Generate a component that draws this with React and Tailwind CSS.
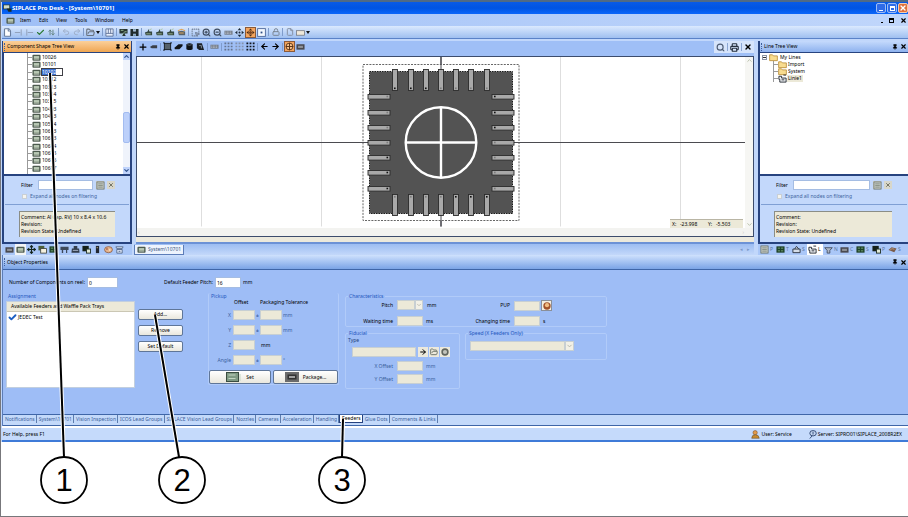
import {
  ArrowLeft,
  ArrowRight,
  ArrowUpDown,
  Check,
  ChevronDown,
  ChevronUp,
  File,
  FolderOpen,
  Lock,
  Move,
  Pin,
  Plus,
  Printer,
  Redo2,
  Search,
  SquareDashedMousePointer,
  Undo2,
  X,
  ZoomIn,
  ZoomOut,
} from "lucide-react";

const MENU = ["Item", "Edit", "View", "Tools", "Window", "Help"];

const SHAPES = [
  "10026", "10101", "10102", "10312", "10313", "10314", "10315", "10403",
  "10413", "10504", "10603", "10613", "10614", "10615", "10616", "10617",
];

const PROPERTY_TABS = [
  "Notifications", "System\\10701", "Vision Inspection", "ICOS Lead Groups",
  "SIPLACE Vision Lead Groups", "Nozzles", "Cameras", "Acceleration",
  "Handling", "Feeders", "Glue Dots", "Comments & Links",
];

const svgProps = { viewBox: "0 0 10 10", className: "size-[9px] shrink-0", "aria-hidden": true };

const Chip = () => (
  <svg {...svgProps}>
    <rect x="0.5" y="2" width="9" height="6.5" rx="1" fill="#4c5a4e" />
    <rect x="2" y="3.4" width="6" height="3" fill="#b9c8b4" />
    <path d="M2 7.4h6" stroke="#e0e8dc" strokeWidth="0.6" />
  </svg>
);

const DarkChip = () => (
  <svg {...svgProps}>
    <rect x="0.5" y="2.5" width="9" height="6" fill="#4a4a50" />
    <rect x="2.3" y="4.2" width="5.4" height="2.4" fill="#8f9298" />
  </svg>
);

const StopLeft = () => (
  <svg {...svgProps}>
    <path d="M1 5h6M8 1.5v7" stroke="#8d9cb5" fill="none" />
  </svg>
);

const StopRight = () => (
  <svg {...svgProps}>
    <path d="M3 5h6M2 1.5v7" stroke="#8d9cb5" fill="none" />
  </svg>
);

const Columns = () => (
  <svg {...svgProps}>
    <path d="M1 1h8v8H1zM1 6h8M3.7 1v5M6.3 1v5" stroke="#55688f" fill="#e8f0fd" strokeWidth="0.9" />
  </svg>
);

const Monitor = () => (
  <svg {...svgProps}>
    <path d="M0.5 1h9v5H6l1.5 3h-4L5 6H0.5z" fill="#27352f" />
    <path d="M2 2.6h3M6 4.2h2.5M3 7.6l3-3" stroke="#9bbf9b" />
  </svg>
);

const AppLogo = () => (
  <svg {...svgProps}>
    <rect x="0.5" y="1" width="7" height="4.5" fill="#cfdccb" stroke="#24352c" strokeWidth="0.8" />
    <path d="M4 5h5.5v3.5H6z" fill="#1d2b24" />
  </svg>
);

const Floppies = () => (
  <svg {...svgProps}>
    <path d="M0.5 1h3v3h3V1h3v8h-3V6.3h-3V9h-3z" fill="#1f2b2b" />
    <path d="M4 2h2M4 8h2" stroke="#3f6d6a" />
  </svg>
);

const Machine = () => (
  <svg {...svgProps}>
    <path d="M1 5l3-1 1-3 1 3h3v4H2z" fill="#35473f" />
    <path d="M2.5 6.5h5M6 2l2.5-1" stroke="#a8c29c" strokeWidth="0.9" />
  </svg>
);

const MachineGold = () => (
  <svg {...svgProps}>
    <path d="M1 4l4-1 4 1v4H2z" fill="#57636b" />
    <path d="M2.5 5.5h5M1 3l4-1.5L9 3" stroke="#e0a457" strokeWidth="1.2" fill="none" />
  </svg>
);

const Keyboard = () => (
  <svg {...svgProps}>
    <rect x="0.5" y="3" width="9" height="4.5" fill="#747d8a" />
    <path d="M1.5 4.5h7M1.5 6h7" stroke="#d7dce5" strokeDasharray="1 0.7" strokeWidth="0.8" />
  </svg>
);

const FourArrows = () => (
  <svg {...svgProps}>
    <path d="M5 0l2 2.6H3zM5 10L3 7.4h4zM0 5l2.6-2v4zM10 5L7.4 7V3z" fill="#1c2a3a" />
    <circle cx="5" cy="5" r="1.1" fill="#1c2a3a" />
  </svg>
);

const FourArrowsHot = () => (
  <svg {...svgProps}>
    <path d="M5 0.5l2 2.4H3zM5 9.5L3 7.1h4zM0.5 5l2.4-2v4zM9.5 5L7.1 7V3z" fill="#4a2a14" />
    <circle cx="5" cy="5" r="1.7" fill="#7a4420" />
  </svg>
);

const Target = () => (
  <svg {...svgProps}>
    <circle cx="5" cy="5" r="3.8" fill="#f6c087" stroke="#5c3517" />
    <path d="M5 1v8M1 5h8" stroke="#5c3517" strokeWidth="1.1" />
  </svg>
);

const FitBox = () => (
  <svg {...svgProps}>
    <rect x="0.7" y="0.7" width="8.6" height="8.6" fill="#f4f8fe" stroke="#4d679a" />
    <rect x="4" y="4" width="2" height="2" fill="#2f4d86" />
  </svg>
);

const Tray = () => (
  <svg {...svgProps}>
    <rect x="0.7" y="3" width="8.6" height="5" fill="#eee8da" stroke="#6f6f73" strokeWidth="0.8" />
  </svg>
);

const Component = () => (
  <svg {...svgProps}>
    <rect x="1.5" y="1.5" width="7" height="7" fill="#56616a" stroke="#14181c" />
    <path d="M0 1h2M8 1h2M0 9h2M8 9h2" stroke="#14181c" />
  </svg>
);

const Blob = () => (
  <svg {...svgProps}>
    <path d="M1 5.5L4 3.5h5v3.5H3z" fill="#3a3f47" />
  </svg>
);

const Eraser = () => (
  <svg {...svgProps}>
    <path d="M0.5 6.5L5 2.5h4.5v2L6 8H1z" fill="#111418" />
  </svg>
);

const Cylinder = () => (
  <svg {...svgProps}>
    <path d="M1.5 2.5v5.5q3.5 2 7 0V2.5q-3.5-2-7 0z" fill="#0e1216" />
    <path d="M2.5 3q2.5 1.2 5 0" stroke="#8792a0" fill="none" strokeWidth="0.7" />
  </svg>
);

const Prism = () => (
  <svg {...svgProps}>
    <path d="M1 1.5h5.5L9 9H3.5L1 7z" fill="#1b2026" />
    <path d="M3.5 4h2.5v3" stroke="#9ba8b8" fill="none" strokeWidth="0.8" />
  </svg>
);

const Dots = ({ color }) => (
  <svg {...svgProps}>
    <path d="M0.5 1.5h9M0.5 5h9M0.5 8.5h9" stroke={color} strokeWidth="1.8" strokeDasharray="2 1.5" />
  </svg>
);

const DotsGrey = () => <Dots color="#66758f" />;
const DotsLight = () => <Dots color="#8391aa" />;
const DotsDark = () => <Dots color="#10151d" />;

const Board = () => (
  <svg {...svgProps}>
    <rect x="0.5" y="1.5" width="9" height="7" fill="#1d4027" />
    <path d="M2 3.5h2.5M5.5 3.5h2.5M2 6.5h2.5M5.5 6.5h2.5" stroke="#79a97b" />
  </svg>
);

const Stack = () => (
  <svg {...svgProps}>
    <rect x="0.5" y="1" width="6.5" height="5" fill="#4d5f38" />
    <rect x="3" y="4" width="6.5" height="5" fill="#f5f2e0" stroke="#3a3d35" strokeWidth="0.9" />
  </svg>
);

const StackDark = () => (
  <svg {...svgProps}>
    <rect x="0.5" y="1" width="7" height="6" fill="#152019" />
    <rect x="5" y="4.5" width="4.5" height="4.5" fill="#e3ead7" stroke="#1f2f24" />
  </svg>
);

const Bench = () => (
  <svg {...svgProps}>
    <path d="M0.5 2h9v3.5H8V9H6.7V5.5H3.5V9H2V5.5H.5z" fill="#3d4859" />
  </svg>
);

const Scanner = () => (
  <svg {...svgProps}>
    <path d="M3 1h4v3h2l.5 4.5h-9L1 4h2z" fill="#333d4b" />
    <path d="M2 6h6" stroke="#aab7cc" />
  </svg>
);

const Bar = () => (
  <svg {...svgProps}>
    <rect x="3.2" y="1" width="3.6" height="8" fill="#222831" />
    <path d="M4 3h1.5" stroke="#c7b37a" />
  </svg>
);

const Palette = () => (
  <svg {...svgProps}>
    <ellipse cx="5" cy="5.2" rx="4.4" ry="3.4" fill="#e5b48d" stroke="#83543a" strokeWidth="0.8" />
    <circle cx="3.3" cy="4.5" r="0.9" fill="#8a3b2c" />
    <circle cx="6.4" cy="5.6" r="0.9" fill="#fff3d9" />
  </svg>
);

const Basket = () => (
  <svg {...svgProps}>
    <path d="M1 2h8l-1 2H2zM2 5h6v4H2z" stroke="#4d5f80" fill="#dbe6f8" strokeWidth="0.9" />
    <path d="M4 7h2" stroke="#4d5f80" />
  </svg>
);

const Sheet = () => (
  <svg {...svgProps}>
    <rect x="1" y="1" width="8" height="8" fill="#c3c8c2" stroke="#5e665e" strokeWidth="0.8" />
    <path d="M2.5 3.2h5M2.5 5h5M2.5 6.8h5" stroke="#6c7769" strokeWidth="0.7" />
  </svg>
);

const Plug = () => (
  <svg {...svgProps}>
    <path d="M1 4.5h8v4H1zM3 4.5l2-3 2.5 3" fill="#d5dde8" stroke="#27303d" strokeWidth="1" />
  </svg>
);

const LineIcon = () => (
  <svg {...svgProps}>
    <path d="M1 2.5h3v2h5V9H2V6H1z" fill="#eceff2" stroke="#20262e" strokeWidth="1" />
    <path d="M6 1.2h3M4 6.5h3" stroke="#20262e" />
  </svg>
);

const Nozzle = () => (
  <svg {...svgProps}>
    <path d="M0.8 3h8.4L6.5 6v3h-3V6z" fill="#aeb6c4" stroke="#3a4558" strokeWidth="0.9" />
  </svg>
);

const Gem = () => (
  <svg {...svgProps}>
    <path d="M0.5 5.5L4 2.5l5.5 1.3L7 8z" fill="#7a5b48" />
    <path d="M2.5 5.3l2-1.2 2.6.6" stroke="#c8ab8f" fill="none" strokeWidth="0.8" />
  </svg>
);

const Folder = () => (
  <svg {...svgProps}>
    <path d="M0.7 2h3.2l1 1.2h4.4V8.5H.7z" fill="#f8dc8f" stroke="#b78a33" strokeWidth="0.9" />
  </svg>
);

const User = () => (
  <svg {...svgProps}>
    <circle cx="4.6" cy="3" r="2.4" fill="#e19a4a" stroke="#7a4b21" strokeWidth="0.6" />
    <path d="M0.8 9.2q0-4 4-4t4.4 4z" fill="#c98a2e" stroke="#5f4b2a" strokeWidth="0.6" />
  </svg>
);

const Server = () => (
  <svg {...svgProps}>
    <ellipse cx="5.6" cy="3.6" rx="3.6" ry="3" fill="#c0d2ee" stroke="#2f4672" />
    <path d="M4.5 6.5L2 9.5M5.6 2v3" stroke="#2f4672" />
  </svg>
);

const lucide = (Glyph, className) => () => <Glyph className={className} strokeWidth={3} />;

const FileIcon = lucide(File, "size-[9px] fill-white text-[#6b7f9f]");
const CheckIcon = lucide(Check, "size-[9px] text-[#2b7a35]");
const SortIcon = lucide(ArrowUpDown, "size-[7px] text-[#5a7b77]");
const UndoIcon = lucide(Undo2, "size-2 text-[#9fb0cb]");
const RedoIcon = lucide(Redo2, "size-2 text-[#9fb0cb]");
const OpenIcon = lucide(FolderOpen, "size-[9px] text-[#69737f]");
const SelectIcon = lucide(SquareDashedMousePointer, "size-[9px] text-[#75849b]");
const ZoomInIcon = lucide(ZoomIn, "size-[9px] text-[#3e4c60]");
const ZoomOutIcon = lucide(ZoomOut, "size-[9px] text-[#3e4c60]");
const LockIcon = lucide(Lock, "size-2 text-[#7c8796]");
const CopyIcon = lucide(File, "size-2 text-[#8792a6]");
const PlusIcon = lucide(Plus, "size-[10px] text-black");
const LeftIcon = lucide(ArrowLeft, "size-[9px] text-black");
const RightIcon = lucide(ArrowRight, "size-[9px] text-black");
const MoveIcon = lucide(Move, "size-[9px] text-[#14251b]");

const MAIN_TOOLS = [
  ["New", FileIcon], ["First", StopLeft], ["Last", StopRight], ["Apply", CheckIcon], ["Sort", SortIcon], null,
  ["Undo", UndoIcon], ["Redo", RedoIcon], null,
  ["Open", OpenIcon, true], null,
  ["Columns", Columns], null,
  ["Monitor", Monitor], ["Save all", Floppies], null,
  ["Head", Machine], ["Gantry", Machine], ["Conveyor", Machine], ["Feeder", MachineGold], null,
  ["Select", SelectIcon], ["Zoom in", ZoomInIcon], ["Zoom out", ZoomOutIcon], ["Keyboard", Keyboard],
  ["Pan", FourArrows], ["Center", FourArrowsHot, false, true], ["Fit", FitBox], null,
  ["Lock", LockIcon], null,
  ["Copy", CopyIcon], ["Tray", Tray, true],
];

const SHAPE_TOOLS = [
  ["Add", PlusIcon], ["Body", Blob], null,
  ["Component", Component], ["Eraser", Eraser], ["Cylinder", Cylinder], ["Prism", Prism], null,
  ["Leads", Keyboard], null,
  ["Grid", DotsGrey], ["Fine grid", DotsLight], ["Balls", DotsDark], null,
  ["Back", LeftIcon], ["Forward", RightIcon], null,
  ["Crosshair", Target, false, true], ["Package", DarkChip],
];

const LEFT_VIEWS = [
  ["Components", DarkChip], ["Component shapes", Chip], ["Fiducials", MoveIcon], ["Panels", Stack], ["Boards", Board],
  ["Stations", Bench], ["Machines", Scanner], ["Setups", StackDark], ["Feeders", Bar], ["Recipes", Palette], ["Jobs", Basket],
];

const RIGHT_VIEWS = [
  ["P", Sheet], ["T", Board], ["S", Plug], ["L", LineIcon], ["N", Nozzle], ["C", DarkChip], ["S", Board], ["P", StackDark], ["S", Gem],
];

const Toolbar = ({ tools }) => (
  <div className="flex items-center">
    {tools.map((tool, i) => {
      if (!tool) return <span key={i} className="mx-px h-2 w-px bg-[#7f9ccc]" />;
      const [label, Glyph, hasMenu, active] = tool;
      return (
        <button
          key={i}
          aria-label={label}
          className={`flex h-[11px] shrink-0 items-center justify-center ${hasMenu ? "w-4" : "w-[11px]"} ${
            active ? "border border-[#8a5a3a] bg-[#f3a45d]" : ""
          }`}
        >
          <Glyph />
          {hasMenu && (
            <svg viewBox="0 0 4 3" className="ml-px h-[3px] w-1">
              <path d="M0 0h4L2 3z" fill="#111" />
            </svg>
          )}
        </button>
      );
    })}
  </div>
);

const PanelHeader = ({ title, className }) => (
  <div className={`flex shrink-0 items-center gap-[2px] px-px ${className}`}>
    <span className="h-2 w-px border-l border-dotted border-[#3d5e9c]" />
    <h2 className="grow whitespace-nowrap">{title}</h2>
    <button aria-label={`Pin ${title}`}><Pin className="size-[6px] fill-black text-black" strokeWidth={2} /></button>
    <button aria-label={`Close ${title}`}><X className="size-[7px] text-black" strokeWidth={4} /></button>
  </div>
);

const FilterPanel = ({ id, comment, className, inputClass }) => (
  <div className="shrink-0 border-t-2 border-[#27437f] bg-[#c3d8fb]">
    <div className={className}>
      <div className="flex items-center pt-1 pl-[2px]">
        <label htmlFor={id} className="w-[17px]">Filter</label>
        <input id={id} className={`h-[10px] border border-[#a5bde3] bg-white px-px ${inputClass}`} />
        <button aria-label="Apply filter" className="ml-[3px] flex size-2 items-center justify-center bg-[#d8d7cb]">
          <Sheet />
        </button>
        <button aria-label="Clear filter" className="ml-[3px] flex size-2 items-center justify-center bg-[#d8d7cb]">
          <X className="size-[6px] text-[#757565]" strokeWidth={4} />
        </button>
      </div>
      <label className="mt-[2px] ml-[3px] flex h-2 items-center gap-[3px] text-[#40659f]">
        <input type="checkbox" defaultChecked disabled className="size-[5px] appearance-none border border-[#c9cfd5] bg-[#f5f4ee]" />
        Expand all nodes on filtering
      </label>
    </div>
    <div className="mx-px mt-1 border-t border-[#7f9fd4]" />
    <div className={className}>
      <div className="mt-[6px] mb-[5px] h-[26px] border-t border-l border-[#8a8d86] bg-[#ece9d8] leading-[7px] whitespace-nowrap">
        <p className="pt-[2px] pl-px">{comment}</p>
        <p className="pl-px">Revision:</p>
        <p className="pl-px">Revision State: Undefined</p>
      </div>
    </div>
  </div>
);

const ShapeTree = () => (
  <section className="flex w-[130px] shrink-0 flex-col">
    <div className="flex grow flex-col border-2 border-t-0 border-[#27437f]">
      <PanelHeader title="Component Shape Tree View" className="-mx-px h-[11px] bg-linear-to-b from-[#fbd09a] to-[#efa651]" />
      <div className="flex h-[122px] border-t border-[#27437f] bg-white">
        <ul className="ml-[23px] flex grow flex-col justify-between border-l border-[#9a9a9a] pt-px pb-[2px]">
          {SHAPES.map((name) => (
            <li key={name} className="flex h-[7px] items-center leading-[7px]">
              <span className="w-1 border-t border-[#9a9a9a]" />
              <Chip />
              {name === "10102" ? (
                <input
                  aria-label="Shape name"
                  defaultValue={name}
                  className="h-2 w-[22px] border border-[#3f3f46] bg-linear-to-r from-[#3a70cf] from-70% to-white to-70% text-white"
                />
              ) : (
                <span className="ml-px">{name}</span>
              )}
            </li>
          ))}
        </ul>
        <div className="flex w-[7px] flex-col items-center justify-between bg-[#eff3fb] text-[#34558f]">
          <ChevronUp className="size-[7px] bg-[#bfd3fb]" strokeWidth={4} />
          <span className="mt-7 h-[31px] w-full rounded-xs border border-[#a3bcf0] bg-[#bcd0fa]" />
          <ChevronDown className="size-[7px] bg-[#bfd3fb]" strokeWidth={4} />
        </div>
      </div>
      <FilterPanel
        id="shape-filter"
        comment="Comment: Al Cap. RVJ 10 x 8.4 x 10.6"
        className="mx-[15px]"
        inputClass="w-[55px]"
      />
    </div>
    <nav className="flex h-[11px] items-center bg-[#aac7f8] pl-[2px]">
      {LEFT_VIEWS.map(([label, Glyph], i) => (
        <button key={label} aria-label={label} className={`flex h-[11px] w-[11px] items-center justify-center ${i === 1 ? "bg-[#f3f5f6]" : ""}`}>
          <Glyph />
        </button>
      ))}
    </nav>
  </section>
);

const PIN_OFFSETS = [-46, -30, -15, 0, 15, 30, 46];

// Package outline, drawn around the placement origin
const PackageDrawing = () => (
  <svg viewBox="-304 -86 616 180" preserveAspectRatio="xMidYMid slice" className="absolute inset-0 size-full">
    {[-239.5, -119.5, 119.5, 239.5].map((x) => (
      <path key={x} d={`M${x} -86V84`} stroke="#dedede" />
    ))}
    <path d="M-304 0H304M0 -86V84" stroke="#4b4b50" strokeWidth="1.2" />
    <rect x="-78" y="-78" width="156" height="156" fill="#fff" stroke="#555" strokeWidth="0.9" strokeDasharray="2 1.2" />
    <path d="M0 -86V-71M0 71V84M-78 0H-71M71 0H78" stroke="#4b4b50" />
    <rect x="-71.5" y="-71" width="143" height="142" fill="#535353" stroke="#1c1c1c" strokeDasharray="1.5 1" />
    {PIN_OFFSETS.map((o, i) => (
      <g key={o} fill="#a9a9a9" stroke="#2c2c2c" strokeWidth="0.9">
        <rect x={o - 2.5} y="-73" width="5" height="21" />
        <rect x={o - 2.5} y="52" width="5" height="21" />
        <rect x="-73" y={o - 2} width="22" height="4.6" />
        <rect x="51" y={o - 2} width="22" height="4.6" />
        <g stroke="none" fill="#111">
          <rect x={o - 1} y="-55" width="1.6" height="1.6" opacity={i < 3 ? 1 : 0.3} />
          <rect x={o - 1} y="53.5" width="1.6" height="1.6" opacity={i > 3 ? 1 : 0.3} />
          <rect x="-54.5" y={o - 0.8} width="1.6" height="1.6" opacity={i > 3 ? 1 : 0.3} />
          <rect x="53" y={o - 0.8} width="1.6" height="1.6" opacity={i < 3 ? 1 : 0.3} />
        </g>
      </g>
    ))}
    <circle r="35.3" fill="none" stroke="#fff" strokeWidth="2.4" />
    <path d="M-35 0H35M0 -35V35" stroke="#fff" strokeWidth="2.4" />
  </svg>
);

const ShapeEditor = () => (
  <section className="mx-1 flex min-w-0 grow flex-col">
    <div className="flex h-[15px] items-start justify-between bg-[#9fbff6] pl-px">
      <Toolbar tools={SHAPE_TOOLS} />
      <div className="flex h-3 items-center gap-[2px] bg-[#d6e4fb] px-[2px]">
        <button aria-label="Find"><Search className="size-[9px] text-[#4d5c74]" strokeWidth={3} /></button>
        <span className="h-2 w-px bg-[#8ba6d4]" />
        <button aria-label="Print"><Printer className="size-[9px] text-[#26303f]" strokeWidth={3} /></button>
        <span className="h-2 w-px bg-[#8ba6d4]" />
        <button aria-label="Close editor"><X className="size-2 text-black" strokeWidth={4} /></button>
      </div>
    </div>
    <div className="relative grow border border-[#3c4c6c] bg-white">
      <PackageDrawing />
      <div className="absolute inset-x-0 bottom-0 flex h-2 items-center justify-between bg-[#f3f3f0] px-px text-[#c3c3bd]">
        <span>‹</span>
        <span className="mr-2">›</span>
      </div>
      <div className="absolute top-0 right-0 bottom-2 flex w-2 flex-col items-center justify-between bg-[#f6f6f3] text-[#b4bba5]">
        <ChevronUp className="size-[7px]" strokeWidth={3} />
        <ChevronDown className="size-[7px]" strokeWidth={3} />
      </div>
      <dl className="absolute right-[10px] bottom-2 flex h-[9px] w-[73px] items-center border-t border-[#b9b5a4] bg-[#ece9d8] pl-[2px]">
        <dt className="w-2">X:</dt>
        <dd className="w-7">-23.998</dd>
        <dt className="w-2">Y:</dt>
        <dd>-5.503</dd>
      </dl>
    </div>
    <div className="h-[7px] border-b-2 border-[#6c92d6] bg-[#ece9dc]" />
    <div className="-ml-[2px] flex h-[11px] items-center justify-between bg-linear-to-b from-[#9dbdf2] to-[#c3d8fa]">
      <button className="flex h-[10px] items-center gap-[2px] border border-t-0 border-[#5c7db9] bg-[#edf3fd] px-[2px] text-[#3c5681]">
        <Chip />
        System\10701
      </button>
      <span className="mr-1 flex gap-1 text-[#7c99ca]"><span>◂</span><span>▸</span></span>
    </div>
  </section>
);

const LineTree = () => (
  <section className="flex w-[150px] shrink-0 flex-col">
    <div className="flex grow flex-col border-2 border-t-0 border-r-0 border-[#27437f]">
      <PanelHeader title="Line Tree View" className="h-[11px] bg-linear-to-b from-[#c5dafc] to-[#8eb2ee]" />
      <div className="grow border-t border-[#27437f] bg-white pt-px pl-[2px]">
        <div className="flex h-[7px] items-center gap-[2px] leading-[7px]">
          <span className="flex size-[5px] items-center justify-center border border-[#8b95a5]"><span className="h-px w-[3px] bg-[#333]" /></span>
          <Folder />
          My Lines
        </div>
        <ul className="ml-[11px] border-l border-[#9a9a9a]">
          {["Import", "System", "Linie1"].map((name) => (
            <li key={name} className="flex h-[7px] items-center leading-[7px]">
              <span className="w-1 border-t border-[#9a9a9a]" />
              {name === "Linie1" ? <LineIcon /> : <Folder />}
              <span className={`px-px ${name === "Linie1" ? "bg-[#ece9d8]" : ""}`}>{name}</span>
            </li>
          ))}
        </ul>
      </div>
      <FilterPanel id="line-filter" comment="Comment:" className="ml-[14px] w-[118px]" inputClass="w-[77px]" />
    </div>
    <nav className="flex h-[11px] items-center bg-[#aac7f8] pl-px text-[#56739f]">
      {RIGHT_VIEWS.map(([label, Glyph], i) => (
        <button key={i} className={`flex h-[11px] w-4 items-center gap-px pl-px ${i === 3 ? "bg-white text-black" : ""}`}>
          <Glyph />
          {label}
        </button>
      ))}
    </nav>
  </section>
);

const Field = ({ label, unit, id, labelClass }) => (
  <div className="flex h-[10px] items-center">
    <label htmlFor={id} className={`pr-1 text-right ${labelClass}`}>{label}</label>
    <input id={id} disabled className="h-[10px] w-[26px] border border-[#c7cfd3] bg-[#ece9d8]" />
    <span className="pl-[3px]">{unit}</span>
  </div>
);

const Group = ({ title, className, children }) => (
  <fieldset className={`min-w-0 rounded-xs border border-[#b1cbf9] ${className}`}>
    <legend className="ml-[2px] h-[6px] px-px leading-[6px] text-[#2457c0]">{title}</legend>
    {children}
  </fieldset>
);

const xpButton = "flex items-center justify-center border border-[#5f7698] bg-linear-to-b from-white to-[#e9e7dd] rounded-xs";

const PICKUP_ROWS = [
  ["X", "mm", true],
  ["Y", "mm", true],
  ["Z", "mm", false],
  ["Angle", "°", true],
];

const Assignment = () => (
  <section className="w-[196px] shrink-0">
    <h3 className="ml-[2px] h-2 leading-[6px] text-[#2457c0]">Assignment</h3>
    <div className="flex gap-[3px]">
      <div className="h-[87px] w-[129px] border border-[#c2cfdf] bg-white">
        <table className="w-full text-left">
          <thead>
            <tr className="h-[9px] bg-[#ece9d8]">
              <th className="border-b border-[#cbc7b4] pl-1 font-normal">Available Feeders and Waffle Pack Trays</th>
            </tr>
          </thead>
          <tbody>
            <tr>
              <td className="flex h-[11px] items-center gap-px pl-px">
                <Check className="size-[9px] text-[#1b5ec2]" strokeWidth={5} />
                JEDEC Test
              </td>
            </tr>
          </tbody>
        </table>
      </div>
      <div className="flex flex-col gap-[5px] pt-2">
        {["Add...", "Remove", "Set Default"].map((label) => (
          <button key={label} className={`h-[11px] w-[45px] ${xpButton}`}>{label}</button>
        ))}
      </div>
    </div>
  </section>
);

const Pickup = () => (
  <section className="w-[131px] shrink-0 rounded-xs border border-t-0 border-[#b1cbf9]">
    <h3 className="ml-[2px] h-[6px] leading-[6px] text-[#2457c0]">Pickup</h3>
    <div className="flex h-[7px] leading-[6px]">
      <span className="ml-[25px] w-[26px]">Offset</span>
      <span className="whitespace-nowrap">Packaging Tolerance</span>
    </div>
    <div className="flex flex-col gap-[5px] pt-1">
      {PICKUP_ROWS.map(([axis, unit, tolerance]) => (
        <div key={axis} className="flex h-[10px] items-center text-[#3b5f9c]">
          <label htmlFor={`pickup-${axis}`} className="w-6 pr-[2px] text-right">{axis}</label>
          <input id={`pickup-${axis}`} disabled className="h-[10px] w-[22px] border border-[#c7cfd3] bg-[#ece9d8]" />
          {tolerance ? (
            <>
              <span className="w-[5px] text-center">±</span>
              <input aria-label={`${axis} tolerance`} disabled className="h-[10px] w-[22px] border border-[#c7cfd3] bg-[#ece9d8]" />
              <span className="pl-px">{unit}</span>
            </>
          ) : (
            <span className="pl-[6px] text-black">{unit}</span>
          )}
        </div>
      ))}
    </div>
    <div className="mt-[5px] flex gap-[2px]">
      <button className={`h-[14px] w-[62px] gap-[5px] ${xpButton}`}>
        <svg viewBox="0 0 15 10" className="h-[10px] w-[15px]">
          <rect x="0.5" y="0.5" width="12" height="9" fill="#7f9a83" stroke="#3b4d40" />
          <path d="M2.5 3h7M2.5 6.5h7M14 2v7" stroke="#c4d6c3" />
        </svg>
        Set
      </button>
      <button className={`h-[14px] w-[65px] gap-1 ${xpButton}`}>
        <svg viewBox="0 0 14 10" className="h-[10px] w-[14px]">
          <rect width="14" height="10" fill="#6b6b6b" />
          <rect x="2.5" y="2.5" width="9" height="5" fill="#333" />
          <path d="M4 5h6" stroke="#c9c9c9" strokeWidth="1.5" />
        </svg>
        Package...
      </button>
    </div>
  </section>
);

const Characteristics = () => (
  <div className="w-[262px] shrink-0">
    <Group title="Characteristics" className="h-[34px]">
      <div className="grid grid-cols-2 gap-y-[5px] pt-px">
        <div className="flex h-[10px] items-center">
          <label htmlFor="pitch" className="w-[51px] pr-1 text-right">Pitch</label>
          <select id="pitch" disabled className="h-[10px] w-[18px] appearance-none border border-[#c7cfd3] bg-[#ece9d8]" />
          <ChevronDown className="h-[10px] w-2 border border-[#c7cfd3] bg-[#f2f0e6] text-[#b1b1a6]" strokeWidth={3} />
          <span className="pl-1">mm</span>
        </div>
        <div className="flex items-center gap-px">
          <div className="flex h-[10px] items-center">
            <label htmlFor="pup" className="w-[38px] pr-1 text-right">PUP</label>
            <input id="pup" disabled className="h-[10px] w-[26px] border border-[#c7cfd3] bg-[#ece9d8]" />
          </div>
          <button aria-label="Reset PUP" className="flex size-[11px] items-center justify-center border border-[#8a8f99] bg-[#f3eee2]">
            <svg viewBox="0 0 10 10" className="size-2">
              <circle cx="5" cy="5" r="4.6" fill="#a2512a" />
              <circle cx="5" cy="4" r="2.6" fill="#f3bd83" />
            </svg>
          </button>
        </div>
        <Field id="waiting" label="Waiting time" unit="ms" labelClass="w-[51px]" />
        <Field id="changing" label="Changing time" unit="s" labelClass="flex w-[38px] justify-end whitespace-nowrap" />
      </div>
    </Group>
    <div className="mt-[3px] flex items-start gap-[5px]">
      <Group title="Fiducial" className="w-[115px] pb-1">
        <label htmlFor="fiducial" className="ml-[2px] block h-2 leading-[8px] text-[#1d3f7d]">Type</label>
        <div className="flex gap-px pt-[3px] pl-[6px]">
          <input id="fiducial" disabled className="h-[10px] w-16 border border-[#c7cfd3] bg-[#ece9d8]" />
          <button aria-label="Go to" className="ml-px flex size-[10px] items-center justify-center bg-[#ece9dc]"><ArrowRight className="size-2" strokeWidth={3} /></button>
          <button aria-label="Browse" className="flex size-[10px] items-center justify-center bg-[#ece9dc]"><FolderOpen className="size-2 text-[#757b70]" strokeWidth={3} /></button>
          <button aria-label="Clear" className="flex size-[10px] items-center justify-center bg-[#ece9dc]">
            <svg viewBox="0 0 10 10" className="size-2">
              <circle cx="5" cy="5" r="3.6" fill="#c3c4bc" stroke="#62665f" strokeWidth="2" />
            </svg>
          </button>
        </div>
        <div className="mt-1 flex flex-col gap-[3px] text-[#3b5f9c]">
          <Field id="x-offset" label="X Offset" unit="mm" labelClass="w-[51px]" />
          <Field id="y-offset" label="Y Offset" unit="mm" labelClass="w-[51px]" />
        </div>
      </Group>
      <Group title="Speed (X Feeders Only)" className="h-[30px] grow">
        <div className="mt-[5px] ml-1 flex">
          <select aria-label="Speed" disabled className="h-[10px] w-[95px] appearance-none border border-[#c7cfd3] bg-[#ece9d8]" />
          <ChevronDown className="h-[10px] w-[9px] border border-[#c7cfd3] bg-[#f2f0e6] text-[#b1b1a6]" strokeWidth={3} />
        </div>
      </Group>
    </div>
  </div>
);

const ObjectProperties = () => (
  <section className="border-l border-[#5c7db9]">
    <PanelHeader title="Object Properties" className="h-[15px] border-b border-[#3f66a8] bg-linear-to-b from-[#cfe1fd] to-[#7ba4e6]" />
    <div className="h-36 bg-[#9ebdf6] pt-[7px] pl-[3px]">
      <div className="flex h-[11px] items-center whitespace-nowrap">
        <label htmlFor="reel" className="ml-[3px] w-[78px]">Number of Components on reel:</label>
        <input id="reel" defaultValue="0" className="h-[11px] w-[31px] border border-[#a5bde3] bg-white pl-px" />
        <label htmlFor="feeder-pitch" className="ml-[46px] w-[51px]">Default Feeder Pitch:</label>
        <input id="feeder-pitch" defaultValue="16" className="h-[11px] w-[26px] border border-[#a5bde3] bg-white pl-px" />
        <span className="pl-[2px]">mm</span>
      </div>
      <div className="flex items-start gap-[6px] pt-[5px]">
        <Assignment />
        <Pickup />
        <Characteristics />
      </div>
    </div>
    <nav className="flex h-3 items-start border-t border-b border-[#3f66a8] bg-[#c3d9fa] text-[#3d5f9b]">
      {PROPERTY_TABS.map((tab) => (
        <button
          key={tab}
          className={`h-2 border-r pr-px pl-[2px] leading-[7px] whitespace-nowrap ${
            tab === "Feeders" ? "border border-t-0 border-[#27437f] bg-white text-black" : "border-[#5d7cae]"
          }`}
        >
          {tab}
        </button>
      ))}
    </nav>
  </section>
);

const CALLOUTS = [
  { n: 1, cx: 64, line: "M50 73L64 457" },
  { n: 2, cx: 182, line: "M155 315L179 457" },
  { n: 3, cx: 342, line: "M343 419L342 457" },
];

const Callouts = () => (
  <svg width="400" height="517" className="pointer-events-none absolute top-0 -left-px">
    {CALLOUTS.map(({ n, cx, line }) => (
      <g key={n}>
        <path d={line} stroke="#fff" strokeWidth="4" />
        <path d={line} stroke="#000" strokeWidth="2" />
        <circle cx={cx} cy="480" r="23" fill="#fff" stroke="#000" strokeWidth="1.8" />
        <text x={cx} y="491" textAnchor="middle" fontSize="31" className="font-['Liberation_Sans',sans-serif]">{n}</text>
      </g>
    ))}
  </svg>
);

const App = () => {
  return (
    <div className="relative flex min-h-screen flex-col overflow-hidden border-b border-l border-[#77777b] bg-white font-['Noto_Sans',sans-serif] text-[5px] leading-[7px] text-black">
      <div className="border-t-2 border-[#506a86] bg-[#c1d7fb] pl-px">
        <header className="flex h-3 items-center bg-linear-to-b from-[#0a5be6] via-[#0054e3] to-[#0b66fa] pl-px text-white">
          <AppLogo />
          <h1 className="grow text-[6px] font-bold">SIPLACE Pro Desk - [System\10701]</h1>
          <div className="flex gap-px">
            <button aria-label="Minimize" className="flex size-[10px] items-end justify-center rounded-xs border border-[#9dbcf5] bg-[#2f6be8] pb-px"><span className="h-px w-1 bg-white" /></button>
            <button aria-label="Restore" className="flex size-[10px] items-center justify-center rounded-xs border border-[#9dbcf5] bg-[#2f6be8]"><span className="size-[5px] border border-t-2 border-white" /></button>
            <button aria-label="Close" className="flex size-[10px] items-center justify-center rounded-xs border border-[#f4cdb0] bg-[#e0713c]"><X className="size-2" strokeWidth={4} /></button>
          </div>
        </header>
        <nav className="flex h-3 items-center bg-linear-to-r from-[#9fbff6] to-[#c0d6fb] pl-1">
          <Chip />
          <div className="ml-[5px] flex grow gap-2">
            {MENU.map((item) => <button key={item}>{item}</button>)}
          </div>
          <div className="flex items-center gap-[6px] pr-px">
            <button aria-label="Minimize document" className="mt-1 h-px w-[2px] bg-black" />
            <button aria-label="Restore document" className="size-[5px] border border-t-2 border-black" />
            <button aria-label="Close document"><X className="size-[7px]" strokeWidth={4} /></button>
          </div>
        </nav>
        <div className="flex h-[13px] items-center border-b border-[#5a82c8] bg-linear-to-b from-[#dbe9fe] to-[#9fbff0]">
          <Toolbar tools={MAIN_TOOLS} />
        </div>
        <main className="flex pt-[2px]">
          <ShapeTree />
          <ShapeEditor />
          <LineTree />
        </main>
        <ObjectProperties />
        <div className="h-[2px] bg-white" />
        <footer className="flex h-[14px] items-center border-b-2 border-[#3f7bd8] bg-[#c5dafb] pr-[6px] pl-px">
          <span className="grow">For Help, press F1</span>
          <span className="flex items-center gap-[2px]"><User />User: Service</span>
          <span className="ml-4 flex items-center gap-px"><Server />Server: SIPRO01\SIPLACE_2008R2EX</span>
        </footer>
      </div>
      <Callouts />
    </div>
  );
};

export default App;
